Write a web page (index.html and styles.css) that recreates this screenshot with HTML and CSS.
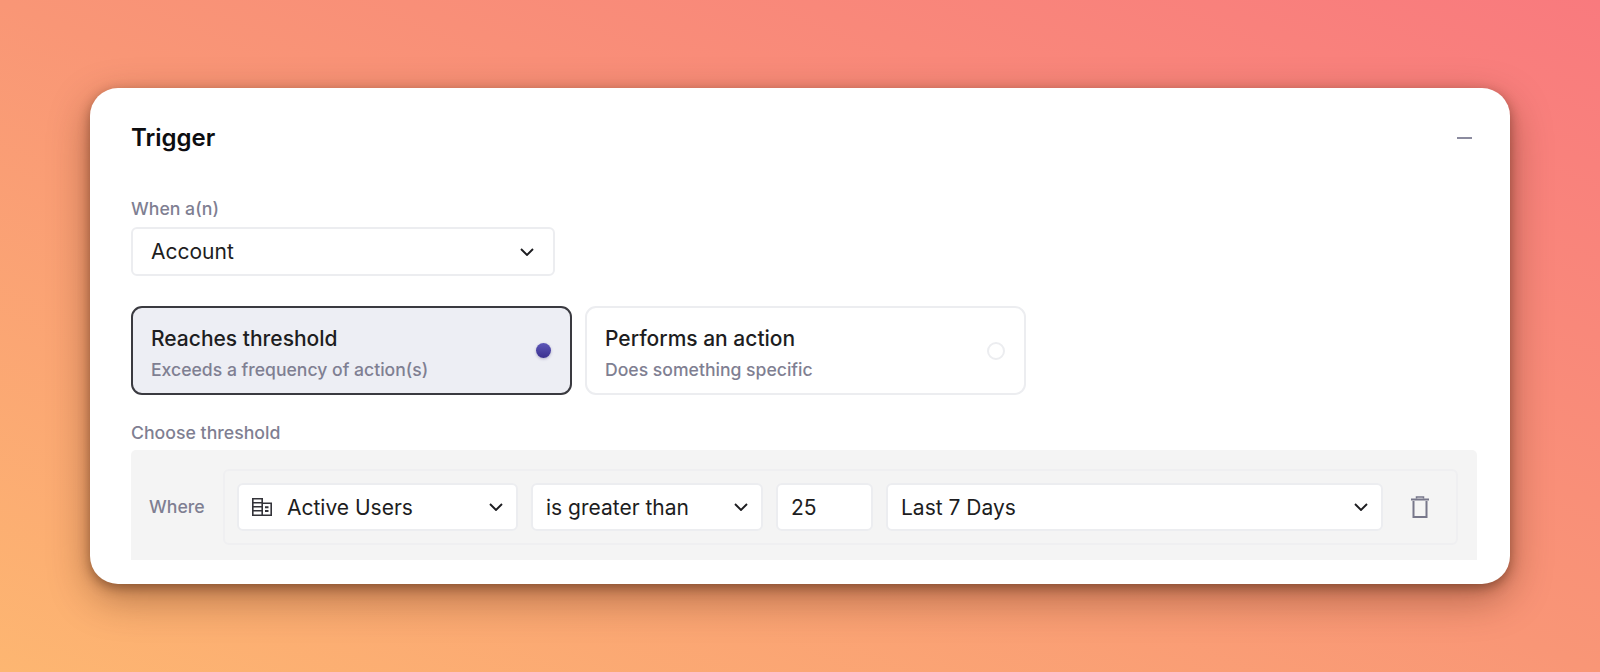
FILE: index.html
```html
<!DOCTYPE html>
<html lang="en">

<head>
  <meta charset="UTF-8" />
  <meta name="viewport" content="width=device-width, initial-scale=1.0" />
  <title>Trigger</title>
  <link rel="stylesheet" href="styles.css">
</head>

<body>
  <svg class="sprites" width="0" height="0">
    <symbol id="chevron" viewBox="0 0 14 8">
      <path d="M1 1l6 6 6-6" fill="none" stroke="currentColor" stroke-width="1.9" />
    </symbol>
  </svg>

  <div class="card">
    <div class="card-header">
      <h2>Trigger</h2>
      <span class="collapse"></span>
    </div>

    <div class="label when-label">When a(n)</div>
    <div class="select select-main">
      <span>Account</span>
      <svg class="chevron"><use href="#chevron" /></svg>
    </div>

    <div class="options">
      <div class="option active">
        <div class="option-text">
          <p class="option-title">Reaches threshold</p>
          <p class="option-desc">Exceeds a frequency of action(s)</p>
        </div>
        <span class="radio"></span>
      </div>
      <div class="option">
        <div class="option-text">
          <p class="option-title">Performs an action</p>
          <p class="option-desc">Does something specific</p>
        </div>
        <span class="radio"></span>
      </div>
    </div>

    <div class="label threshold-label">Choose threshold</div>
    <div class="panel">
      <span class="where">Where</span>
      <div class="filter">
        <div class="select field-metric">
          <svg class="building" viewBox="0 0 20 18" fill="none" stroke="#333339" stroke-width="1.6">
            <path d="M.8 17.2V.8h9.4v16.4zM.8 4.75h9.4M.8 8.75h9.4M.8 12.75h9.4M10.2 5.25h9v12h-9" />
            <path d="M13 9.25h3.5M13 13h3.5" stroke-width="2" />
          </svg>
          <span class="metric-name">Active Users</span>
          <svg class="chevron"><use href="#chevron" /></svg>
        </div>
        <div class="select field-operator">
          <span>is greater than</span>
          <svg class="chevron"><use href="#chevron" /></svg>
        </div>
        <div class="select field-value">25</div>
        <div class="select field-range">
          <span>Last 7 Days</span>
          <svg class="chevron"><use href="#chevron" /></svg>
        </div>
        <svg class="trash" viewBox="0 0 18 22" fill="none" stroke="#77778a" stroke-width="2">
          <path d="M0 3.5h18" />
          <path d="M5.5 2.5V1h7v1.5" stroke-width="1.5" />
          <path d="M2.5 5v16h13V5" />
        </svg>
      </div>
    </div>
  </div>
</body>

</html>
```

FILE: styles.css
```css
* {
  margin: 0;
  padding: 0;
  box-sizing: border-box;
}

html,
body {
  height: 100%;
}

body {
  padding: 88px 90px;
  background: linear-gradient(to top right, #fdb671 0%, #f99676 50%, #f97a7e 100%);
  font-family: Inter, "Liberation Sans", sans-serif;
  color: #1d1d21;
  overflow: hidden;
}

.sprites {
  position: absolute;
}

.card {
  width: 1420px;
  height: 496px;
  padding: 33px 33px 24px 41px;
  background: #fff;
  border-radius: 28px;
  box-shadow: 0 4px 12px rgba(70, 30, 10, .45), 0 14px 40px rgba(70, 30, 10, .4);
}

.card-header {
  height: 34px;
  display: flex;
  align-items: center;
  justify-content: space-between;
}

.card-header h2 {
  padding-bottom: 2px;
  font-size: 24px;
  font-weight: 600;
  color: #0d0d10;
}

.collapse {
  width: 15px;
  height: 2px;
  margin-right: 5px;
  background: #8b8b9f;
}

.label {
  height: 20px;
  line-height: 20px;
  font-size: 17.7px;
  font-weight: 500;
  color: #7f7f92;
}

.when-label {
  margin-top: 44px;
}

.threshold-label {
  margin-top: 28px;
}

.select {
  display: flex;
  align-items: center;
  justify-content: space-between;
  background: #fff;
  border: 2px solid #ecedf0;
  border-radius: 6px;
  font-size: 21px;
}

.chevron {
  width: 14px;
  height: 8px;
  flex: none;
  color: #1d1d21;
}

.select-main {
  width: 424px;
  height: 49px;
  margin-top: 8px;
  padding: 0 19px 0 18px;
}

.options {
  margin-top: 30px;
  display: flex;
  gap: 13px;
}

.option {
  width: 441px;
  height: 89px;
  padding: 0 19px 0 18px;
  display: flex;
  align-items: center;
  justify-content: space-between;
  border: 2px solid #ecedf0;
  border-radius: 11px;
}

.option.active {
  background: #edeef4;
  border-color: #3a3a40;
}

.option-text {
  padding-top: 5px;
}

.option-title {
  font-size: 21px;
  font-weight: 500;
  line-height: 26px;
}

.option-desc {
  margin-top: 7px;
  font-size: 17.6px;
  font-weight: 500;
  line-height: 22px;
  color: #7f7f92;
}

.radio {
  width: 18px;
  height: 18px;
  border: 2px solid #ecedf0;
  border-radius: 50%;
}

.option.active .radio {
  width: 15px;
  height: 15px;
  border: none;
  background: linear-gradient(#5d57b8, #3a2f8e);
  box-shadow: 0 1px 3px rgba(40, 30, 110, .3);
}

.panel {
  height: 110px;
  margin-top: 7px;
  padding: 19px 19px 15px 18px;
  display: flex;
  align-items: center;
  justify-content: space-between;
  background: #f4f4f4;
  border-radius: 5px 5px 0 0;
}

.where {
  padding-bottom: 2px;
  font-size: 17.7px;
  font-weight: 500;
  color: #7f7f92;
}

.filter {
  width: 1235px;
  height: 76px;
  padding: 0 26px 0 12px;
  display: flex;
  align-items: center;
  gap: 13px;
  border: 2px solid #efeff1;
  border-radius: 6px;
}

.filter .select {
  height: 48px;
  padding: 0 13px;
}

.field-metric {
  width: 281px;
}

.building {
  width: 20px;
  height: 18px;
  margin-right: 15px;
  flex: none;
}

.metric-name {
  flex: 1;
}

.field-operator {
  width: 232px;
}

.field-value {
  width: 97px;
}

.field-range {
  width: 497px;
}

.trash {
  width: 18px;
  height: 22px;
  margin-left: 15px;
  flex: none;
}
```
